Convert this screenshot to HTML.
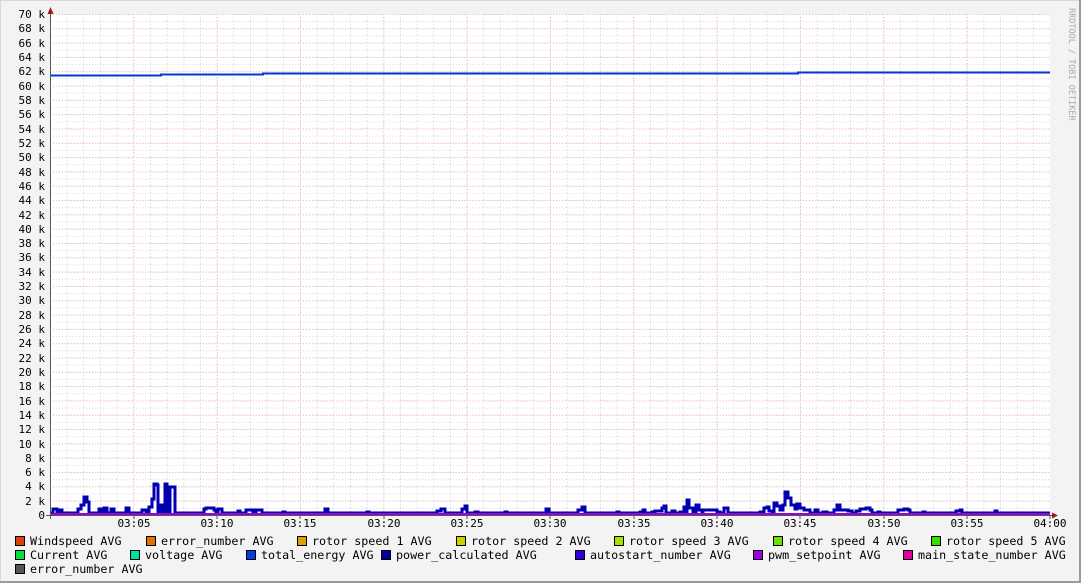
<!DOCTYPE html>
<html><head><meta charset="utf-8"><style>
html,body{margin:0;padding:0;background:#f3f3f3;}
svg{display:block;}
text{font-family:"DejaVu Sans Mono","Liberation Mono",monospace;}
</style></head><body>
<svg width="1081" height="583" viewBox="0 0 1081 583" xmlns="http://www.w3.org/2000/svg">
<defs>
<pattern id="minor" x="50" y="515" width="16.6667" height="7.157" patternUnits="userSpaceOnUse">
<line x1="0.5" y1="0" x2="0.5" y2="7.157" stroke="#d6d6d6" stroke-width="1" stroke-dasharray="1,2"/>
<line x1="0" y1="0.5" x2="16.6667" y2="0.5" stroke="#d6d6d6" stroke-width="1" stroke-dasharray="1,2"/>
</pattern>
<pattern id="major" x="50" y="515" width="83.333" height="14.314" patternUnits="userSpaceOnUse">
<line x1="0.5" y1="0" x2="0.5" y2="14.314" stroke="#f0b4b4" stroke-width="1" stroke-dasharray="1,2"/>
<line x1="0" y1="0.5" x2="83.333" y2="0.5" stroke="#f0b4b4" stroke-width="1" stroke-dasharray="1,2"/>
</pattern>
</defs>
<rect x="0" y="0" width="1081" height="583" fill="#f3f3f3"/>
<rect x="0" y="0" width="1081" height="1" fill="#d8d8d8"/>
<rect x="0" y="0" width="1" height="583" fill="#d8d8d8"/>
<rect x="1079" y="0" width="2" height="583" fill="#9a9a9a"/>
<rect x="0" y="581" width="1081" height="2" fill="#9a9a9a"/>
<rect x="50" y="14" width="1000" height="501" fill="#ffffff"/>
<rect x="50" y="14" width="1000" height="501" fill="url(#minor)"/>
<rect x="50" y="14" width="1000" height="501" fill="url(#major)"/>

<g font-size="11" fill="#000" text-anchor="end">
<text x="45" y="519">0</text>
<text x="45" y="505">2 k</text><text x="45" y="490">4 k</text><text x="45" y="476">6 k</text><text x="45" y="462">8 k</text>
<text x="45" y="448">10 k</text><text x="45" y="433">12 k</text><text x="45" y="419">14 k</text><text x="45" y="405">16 k</text>
<text x="45" y="390">18 k</text><text x="45" y="376">20 k</text><text x="45" y="362">22 k</text><text x="45" y="347">24 k</text>
<text x="45" y="333">26 k</text><text x="45" y="319">28 k</text><text x="45" y="304">30 k</text><text x="45" y="290">32 k</text>
<text x="45" y="276">34 k</text><text x="45" y="261">36 k</text><text x="45" y="247">38 k</text><text x="45" y="233">40 k</text>
<text x="45" y="219">42 k</text><text x="45" y="204">44 k</text><text x="45" y="190">46 k</text><text x="45" y="176">48 k</text>
<text x="45" y="161">50 k</text><text x="45" y="147">52 k</text><text x="45" y="133">54 k</text><text x="45" y="118">56 k</text>
<text x="45" y="104">58 k</text><text x="45" y="90">60 k</text><text x="45" y="75">62 k</text><text x="45" y="61">64 k</text>
<text x="45" y="47">66 k</text><text x="45" y="32">68 k</text><text x="45" y="18">70 k</text>
</g>
<g font-size="11" fill="#000" text-anchor="middle">
<text x="134" y="527">03:05</text><text x="217" y="527">03:10</text><text x="300" y="527">03:15</text>
<text x="384" y="527">03:20</text><text x="467" y="527">03:25</text><text x="550" y="527">03:30</text>
<text x="634" y="527">03:35</text><text x="717" y="527">03:40</text><text x="800" y="527">03:45</text>
<text x="884" y="527">03:50</text><text x="967" y="527">03:55</text><text x="1050" y="527">04:00</text>
</g>

<path d="M50 75.5 H161 V74.5 H263 V73.5 H798 V72.5 H1050" fill="none" stroke="#0038d8" stroke-width="2"/>
<path fill="none" stroke="#0000b0" stroke-width="3" d="M50 513 H53 V509 H57 V513 H60 V510 H62 V513
H78 V509 H81 V505 H84 V497 H87 V502 H89 V513
H99 V509 H102 V513 H104 V508 H107 V513 H111 V509 H114 V513 H126 V508 H129 V513
H142 V510 H146 V513 H149 V507 H152 V499 H154 V484 H157 V485 H158 V513 H161 V505 H162 V513 H165 V484 H167 V513 H170 V487 H175 V513
H204 V509 H206 V508 H214 V510 H216 V513 H218 V509 H222 V513
H238 V511 H240 V513 H246 V510 H253 V512 H256 V510 H262 V513
H283 V512 H285 V513 H325 V509 H328 V513
H367 V512 H369 V513 H437 V511 H441 V509 H445 V513 H462 V509 H465 V506 H467 V513
H475 V512 H478 V513 H505 V512 H507 V513 H546 V509 H549 V513
H578 V510 H582 V507 H585 V513 H617 V512 H619 V513 H640 V512 H643 V510 H645 V513
H652 V512 H655 V511 H662 V508 H664 V506 H666 V513 H672 V511 H675 V513
H680 V512 H684 V507 H686 V513 H687 V500 H689 V508 H693 V513 H696 V505 H699 V510 H702 V513
H703 V510 H717 V513 H718 V512 H720 V513 H724 V508 H728 V513
H760 V512 H764 V508 H767 V507 H769 V511 H772 V513 H774 V503 H777 V506 H780 V510 H783 V505 H785 V492 H788 V498 H791 V505 H795 V509 H797 V504 H800 V508 H804 V510 H810 V513 H815 V510 H818 V513
H823 V512 H827 V513 H834 V510 H837 V505 H840 V510 H848 V511 H852 V513
H856 V511 H860 V509 H866 V508 H870 V510 H872 V513 H878 V512 H880 V513
H898 V510 H904 V509 H908 V510 H910 V513 H923 V512 H925 V513 H956 V511 H960 V510 H962 V513 H995 V511 H997 V513 H1050"/>
<line x1="50" y1="514" x2="1050" y2="514" stroke="#a000d8" stroke-width="2"/>

<line x1="50.5" y1="10" x2="50.5" y2="519" stroke="#555" stroke-width="1"/>
<line x1="46" y1="515.5" x2="1054" y2="515.5" stroke="#555" stroke-width="1"/>
<polygon points="47.5,14 50.5,7 53.5,14" fill="#a01818"/>
<polygon points="1052,512.5 1058,515.5 1052,518.5" fill="#a01818"/>
<g stroke="#555" stroke-width="1">
<line x1="134" y1="515" x2="134" y2="519"/><line x1="217" y1="515" x2="217" y2="519"/><line x1="300" y1="515" x2="300" y2="519"/>
<line x1="384" y1="515" x2="384" y2="519"/><line x1="467" y1="515" x2="467" y2="519"/><line x1="550" y1="515" x2="550" y2="519"/>
<line x1="634" y1="515" x2="634" y2="519"/><line x1="717" y1="515" x2="717" y2="519"/><line x1="800" y1="515" x2="800" y2="519"/>
<line x1="884" y1="515" x2="884" y2="519"/><line x1="967" y1="515" x2="967" y2="519"/><line x1="1050" y1="515" x2="1050" y2="519"/>
</g>

<text x="0" y="0" font-size="8.5" fill="#aaa" transform="translate(1069,8) rotate(90)">RRDTOOL / TOBI OETIKER</text>

<g stroke="#000" stroke-width="1">
<rect x="15.5" y="536.5" width="9" height="9" fill="#e04010"/>
<rect x="146.5" y="536.5" width="9" height="9" fill="#e07000"/>
<rect x="297.5" y="536.5" width="9" height="9" fill="#e0a000"/>
<rect x="456.5" y="536.5" width="9" height="9" fill="#d0d000"/>
<rect x="614.5" y="536.5" width="9" height="9" fill="#a8e000"/>
<rect x="773.5" y="536.5" width="9" height="9" fill="#70e000"/>
<rect x="931.5" y="536.5" width="9" height="9" fill="#30e000"/>
<rect x="15.5" y="550.5" width="9" height="9" fill="#00e040"/>
<rect x="130.5" y="550.5" width="9" height="9" fill="#00e0a0"/>
<rect x="246.5" y="550.5" width="9" height="9" fill="#0040e0"/>
<rect x="381.5" y="550.5" width="9" height="9" fill="#0000a0"/>
<rect x="575.5" y="550.5" width="9" height="9" fill="#3000e0"/>
<rect x="753.5" y="550.5" width="9" height="9" fill="#a000e0"/>
<rect x="903.5" y="550.5" width="9" height="9" fill="#e000a0"/>
<rect x="15.5" y="564.5" width="9" height="9" fill="#555"/>
</g>
<g font-size="11.7" fill="#000">
<text x="30" y="545">Windspeed AVG</text>
<text x="161" y="545">error_number AVG</text>
<text x="312" y="545">rotor speed 1 AVG</text>
<text x="471" y="545">rotor speed 2 AVG</text>
<text x="629" y="545">rotor speed 3 AVG</text>
<text x="788" y="545">rotor speed 4 AVG</text>
<text x="946" y="545">rotor speed 5 AVG</text>
<text x="30" y="559">Current AVG</text>
<text x="145" y="559">voltage AVG</text>
<text x="261" y="559">total_energy AVG</text>
<text x="396" y="559">power_calculated AVG</text>
<text x="590" y="559">autostart_number AVG</text>
<text x="768" y="559">pwm_setpoint AVG</text>
<text x="918" y="559">main_state_number AVG</text>
<text x="30" y="573">error_number AVG</text>
</g>
</svg>
</body></html>
